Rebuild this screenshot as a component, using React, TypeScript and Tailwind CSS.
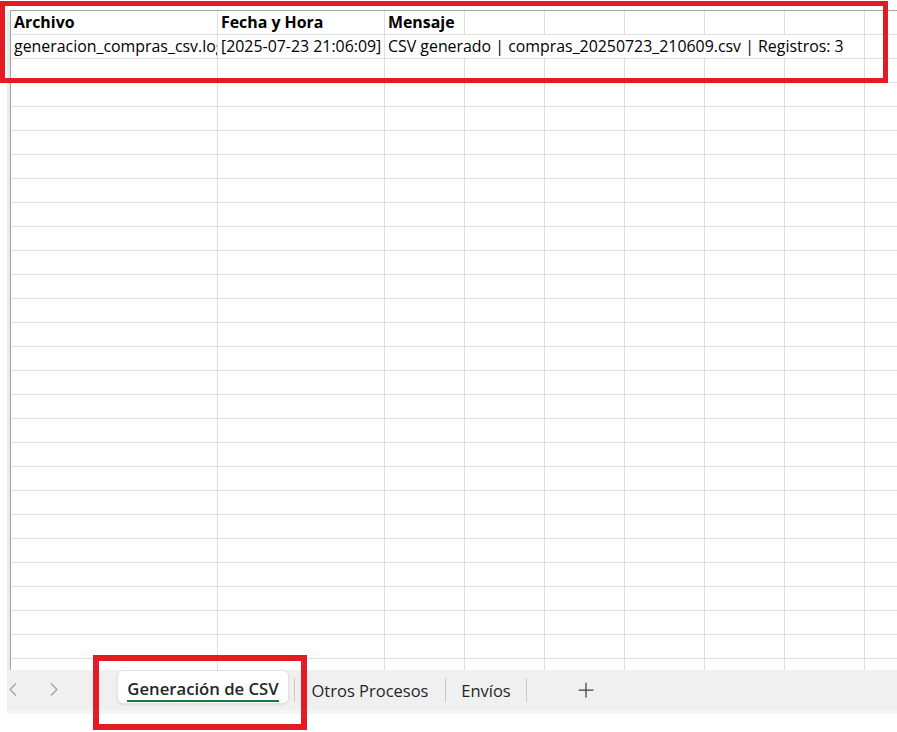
import { Plus } from 'lucide-react';

const colWidths = [207, 167, 80, 80, 80, 80, 80, 80, 80];
const rowCount = 28;

function Cell({ w, children, bold }: { w: number; children?: React.ReactNode; bold?: boolean }) {
  return (
    <div
      className={`shrink-0 h-full px-[3px] whitespace-nowrap overflow-hidden leading-[23px] border-r border-[#dedede] ${bold ? 'font-bold' : ''}`}
      style={{ width: w }}
    >
      {children}
    </div>
  );
}

function Row({ index }: { index: number }) {
  if (index === 0) {
    return (
      <div className="flex h-[24px] border-b border-[#dedede]">
        <Cell w={colWidths[0]} bold>Archivo</Cell>
        <Cell w={colWidths[1]} bold>Fecha y Hora</Cell>
        <Cell w={colWidths[2]} bold>Mensaje</Cell>
        {colWidths.slice(3).map((w, i) => <Cell key={i} w={w} />)}
      </div>
    );
  }
  if (index === 1) {
    return (
      <div className="flex h-[24px] border-b border-[#dedede]">
        <Cell w={colWidths[0]}>generacion_compras_csv.log</Cell>
        <Cell w={colWidths[1]}>[2025-07-23 21:06:09]</Cell>
        {/* text spills over columns C..H, so their inner gridlines are hidden */}
        <Cell w={480}>CSV generado | compras_20250723_210609.csv | Registros: 3</Cell>
        {colWidths.slice(8).map((w, i) => <Cell key={i} w={w} />)}
      </div>
    );
  }
  return (
    <div className="flex h-[24px] border-b border-[#dedede]">
      {colWidths.map((w, i) => <Cell key={i} w={w} />)}
    </div>
  );
}

export default function App() {
  return (
    <div className="relative w-[897px] h-[732px] bg-white overflow-hidden font-['Open_Sans',sans-serif] text-[15.9px] text-black">
      {/* Sheet grid */}
      <div className="flex h-[670px] pt-[10px] pl-[7px]">
        <div className="w-[3px] mt-[1px] bg-[#ececec]" />
        <div className="flex-1 overflow-hidden border-t border-l border-[#a3a3a3]">
          {Array.from({ length: rowCount }).map((_, i) => <Row key={i} index={i} />)}
        </div>
      </div>

      {/* Sheet tabs */}
      <div className="ml-[7px] h-[40px] bg-[#f0f0f0] flex items-start text-[16.5px] text-[#262626]">
        <div className="w-[110px] flex pt-[13px] pl-[2px]">
          <svg width="8" height="13" viewBox="0 0 8 13" fill="none">
            <polyline points="7,0.5 1,6.5 7,12.5" stroke="#a3a3a3" strokeWidth="1.3" />
          </svg>
          <svg width="8" height="13" viewBox="0 0 8 13" fill="none" className="ml-[33px]">
            <polyline points="1,0.5 7,6.5 1,12.5" stroke="#a3a3a3" strokeWidth="1.3" />
          </svg>
        </div>

        <div className="w-[172px] h-[34px] bg-white rounded-[6px] border border-[#e2e2e2] shadow-[0_1px_2px_rgba(0,0,0,0.08)] flex justify-center pt-[6px]">
          <span className="block h-[25px] leading-[23px] text-[16.7px] font-semibold border-b-2 border-[#107c41]">Generación de CSV</span>
        </div>

        <div className="ml-[5px] mt-[8px] w-px h-[24px] bg-[#c8c8c8]" />
        <div className="w-[150px] text-center pt-[9px] leading-[23px]">Otros Procesos</div>
        <div className="mt-[8px] w-px h-[24px] bg-[#c8c8c8]" />
        <div className="w-[80px] text-center pt-[9px] leading-[23px]">Envíos</div>
        <div className="mt-[8px] w-px h-[24px] bg-[#c8c8c8]" />
        <div className="w-[118px] flex justify-center pt-[8px]">
          <Plus size={24} strokeWidth={1.25} color="#404040" />
        </div>
      </div>
      <div className="ml-[7px] h-[4px] bg-[#f6f6f6]" />

      {/* Annotation boxes */}
      <div className="absolute left-0 top-[1px] w-[888px] h-[82px] border-[5px] border-[#e31b23]" />
      <div className="absolute left-[93px] top-[655px] w-[214px] h-[75px] border-[6px] border-[#e31b23]" />
    </div>
  );
}
